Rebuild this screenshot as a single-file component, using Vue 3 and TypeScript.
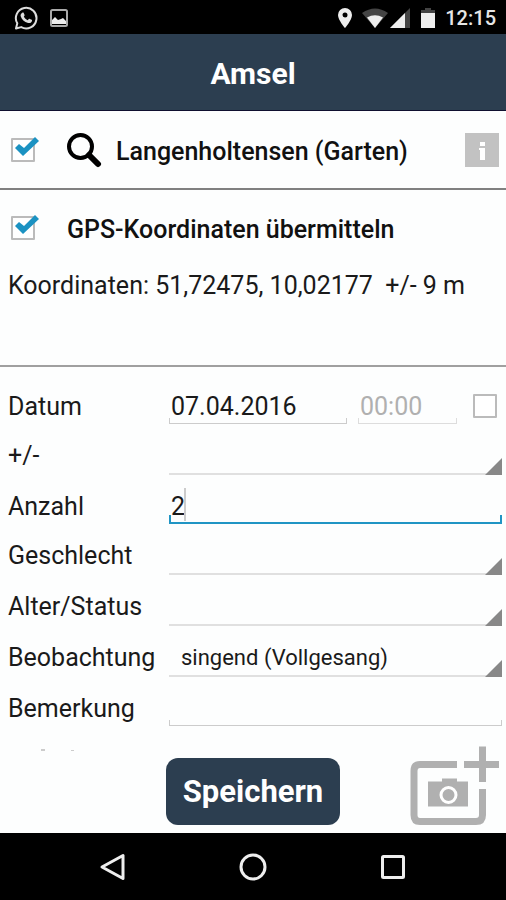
<script setup lang="ts">
import { ref } from 'vue'

interface Field {
  id: string
  label: string
  kind: 'text' | 'select'
  value: string
  active?: boolean
}

const useLocation = ref(true)
const sendGps = ref(true)
const date = ref('07.04.2016')
const time = ref('')
const withTime = ref(false)

const fields = ref<Field[]>([
  { id: 'accuracy', label: '+/-', kind: 'select', value: '' },
  { id: 'count', label: 'Anzahl', kind: 'text', value: '2', active: true },
  { id: 'sex', label: 'Geschlecht', kind: 'select', value: '' },
  { id: 'age', label: 'Alter/Status', kind: 'select', value: '' },
  { id: 'observation', label: 'Beobachtung', kind: 'select', value: 'singend (Vollgesang)' },
  { id: 'remark', label: 'Bemerkung', kind: 'text', value: '' },
])
</script>

<template>
  <div class="screen">
    <div class="status">
      <svg class="whatsapp" viewBox="0 0 24 24" width="24" height="24">
        <path d="M2 22.500 L3.300 17.300 A10.300 10.300 0 1 1 7.200 21.100 Z" fill="none" stroke="#ddd" stroke-width="2" stroke-linejoin="round" />
        <path d="M8.300 6.700c.5-.4 1.200-.3 1.400.2l.9 2c.1.400 0 .7-.8 1.700.9 1.800 2.100 2.900 3.900 3.700l1.100-1.300c.3-.3.6-.3 1-.1l1.900.9c.5.300.4.8.2 1.400-.5 1.500-2.300 2.200-3.800 1.800-3.800-1-6.500-3.600-7.400-6.700-.4-1.500.3-2.800 1.500-3.600z" fill="#ddd" />
      </svg>
      <svg viewBox="0 0 20 20" width="20" height="20">
        <rect x="2" y="2" width="16" height="16" rx="1.500" fill="none" stroke="#aaa" stroke-width="2" />
        <path d="M3 16v-4l3-3 3 3 3-1 2-1 3 3v3z" fill="#eee" />
      </svg>
      <div class="spacer"></div>
      <svg class="pin" viewBox="0 0 16 20" width="16" height="20">
        <path d="M8 0a7 7 0 0 0-7 7c0 5 7 13 7 13s7-8 7-13a7 7 0 0 0-7-7zm0 4.500a2.500 2.500 0 1 1 0 5 2.500 2.500 0 0 1 0-5z" fill="#eee" fill-rule="evenodd" />
      </svg>
      <svg class="wifi" viewBox="0 0 26 20" width="26" height="20">
        <path d="M0 5Q13-4 26 5L13 20z" fill="#444" />
        <path d="M5 9.500Q13 5 21 9.500L13 20z" fill="#eee" />
      </svg>
      <svg class="signal" viewBox="0 0 20 20" width="20" height="20">
        <path d="M0 20L20 0v20z" fill="#444" />
        <path d="M0 20L15 5v15z" fill="#eee" />
      </svg>
      <svg class="battery" viewBox="0 0 16 22" width="16" height="22">
        <path d="M1 3h4V1h6v2h4v3H1z" fill="#444" />
        <path d="M1 6h14v15H1z" fill="#eee" />
      </svg>
      <span class="clock">12:15</span>
    </div>

    <header class="header"><h1>Amsel</h1></header>

    <section class="place">
      <label class="check">
        <input v-model="useLocation" type="checkbox" aria-label="Langenholtensen (Garten)" />
        <svg v-if="useLocation" class="tick" viewBox="0 0 24 20" width="24" height="20">
          <path d="M0 11l4-4 5 4L20 0l4 4L8 19z" fill="#1b92c2" />
        </svg>
      </label>
      <button class="search" type="button" aria-label="Ort suchen">
        <svg viewBox="0 0 36 36" width="36" height="36">
          <circle cx="14.500" cy="14.500" r="11.500" fill="none" stroke="#000" stroke-width="4" />
          <path d="M23 23l9 9" stroke="#000" stroke-width="6" stroke-linecap="round" />
        </svg>
      </button>
      <span class="strong name">Langenholtensen (Garten)</span>
      <button class="info" type="button" aria-label="Information">
        <svg viewBox="0 0 34 34" width="34" height="34">
          <path d="M15 9h5v4h-5zM14 15h6v12h-5V17h-1z" fill="#fff" />
        </svg>
      </button>
    </section>

    <section class="gps">
      <label class="gps-row">
        <span class="check">
          <input v-model="sendGps" type="checkbox" />
          <svg v-if="sendGps" class="tick" viewBox="0 0 24 20" width="24" height="20">
            <path d="M0 11l4-4 5 4L20 0l4 4L8 19z" fill="#1b92c2" />
          </svg>
        </span>
        <span class="strong">GPS-Koordinaten übermitteln</span>
      </label>
      <p class="coords">Koordinaten: 51,72475, 10,02177&nbsp; +/- 9 m</p>
    </section>

    <form id="sighting" class="form" @submit.prevent>
      <div class="row text first">
        <label for="date">Datum</label>
        <div class="controls">
          <div class="field"><input id="date" v-model="date" type="text" /></div>
          <div class="field time"><input v-model="time" type="text" placeholder="00:00" aria-label="Uhrzeit" /></div>
          <span class="check"><input v-model="withTime" type="checkbox" aria-label="Uhrzeit angeben" /></span>
        </div>
      </div>
      <div v-for="f in fields" :key="f.id" class="row" :class="f.kind">
        <label :for="f.id">{{ f.label }}</label>
        <div v-if="f.kind === 'text'" class="field" :class="{ active: f.active }">
          <input :id="f.id" v-model="f.value" type="text" />
          <span v-if="f.active" class="caret"></span>
        </div>
        <div v-else class="spinner">
          <select :id="f.id" v-model="f.value">
            <option :value="f.value">{{ f.value }}</option>
          </select>
        </div>
      </div>
      <svg class="clipped" viewBox="0 0 40 2" width="40" height="2">
        <path d="M2 0h4v2H2zM32 1h3v1h-3z" fill="#ccc" />
      </svg>
    </form>

    <footer class="actions">
      <button class="save" type="submit" form="sighting">Speichern</button>
      <button class="photo" type="button" aria-label="Foto hinzufügen">
        <svg viewBox="0 0 90 80" width="90" height="80">
          <path d="M47 18.500H10Q4 18.500 4 25V69Q4 75.500 10 75.500H66Q72.500 75.500 72.500 69V43" fill="none" stroke="#b0b0b0" stroke-width="7" />
          <path d="M54 18.500H89M72.500 0.500V36" fill="none" stroke="#b0b0b0" stroke-width="7" />
          <path d="M18 35.500h14v-3h15v3h11v25H18z" fill="#b0b0b0" />
          <circle cx="38.500" cy="49" r="7.500" fill="#b0b0b0" stroke="#fff" stroke-width="3" />
        </svg>
      </button>
    </footer>

    <nav class="nav">
      <button type="button" aria-label="Zurück">
        <svg viewBox="0 0 28 28" width="28" height="28"><path d="M24 2.500v23L3 14z" fill="none" stroke="#eee" stroke-width="3" stroke-linejoin="round" /></svg>
      </button>
      <button type="button" aria-label="Startbildschirm">
        <svg viewBox="0 0 28 28" width="28" height="28"><circle cx="14" cy="14" r="12" fill="none" stroke="#eee" stroke-width="3" /></svg>
      </button>
      <button type="button" aria-label="Übersicht">
        <svg viewBox="0 0 28 28" width="28" height="28"><rect x="3.500" y="3.500" width="21" height="21" rx="1" fill="none" stroke="#eee" stroke-width="3" /></svg>
      </button>
    </nav>
  </div>
</template>

<style>
body {
  background: #fff;
}
</style>

<style scoped>
.screen {
  display: flex;
  flex-direction: column;
  min-height: 100vh;
  font-family: Roboto, "Liberation Sans", sans-serif;
  font-size: 25px;
  color: #1a1a1a;
  background: #fdfefe;
}
.screen * {
  box-sizing: border-box;
}
svg {
  display: block;
  flex: none;
}
button {
  padding: 0;
  border: 0;
  background: none;
  font: inherit;
}
.status {
  display: flex;
  align-items: center;
  height: 34px;
  padding: 1px 10px 0 14px;
  background: #000;
}
.whatsapp {
  margin-right: 11px;
}
.spacer {
  flex: 1;
}
.pin {
  margin-right: 9px;
}
.signal {
  margin: 0 10px 0 2px;
}
.battery {
  margin-right: 9px;
}
.clock {
  color: #e6e6e6;
  font-size: 20px;
  font-weight: 500;
}
.header {
  display: flex;
  align-items: center;
  justify-content: center;
  height: 77px;
  background: #2c3e50;
  border-bottom: 1px solid #101030;
}
h1 {
  margin: 0;
  padding-top: 2px;
  font-size: 30px;
  font-weight: 700;
  color: #fff;
}
.place {
  display: flex;
  align-items: center;
  height: 79px;
  padding: 0 7px 0 11px;
  border-bottom: 2px solid #808080;
}
.check {
  position: relative;
  display: block;
  flex: none;
  width: 24px;
  height: 24px;
}
.check input {
  display: block;
  appearance: none;
  width: 24px;
  height: 24px;
  margin: 0;
  border: 2px solid #bbb;
  border-radius: 1px;
  background: #fff;
}
.tick {
  position: absolute;
  left: 4px;
  top: -1px;
}
.search {
  margin: 0 14px 0 31px;
}
.strong {
  font-weight: 500;
  color: #111;
}
.name {
  padding-top: 4px;
}
.info {
  margin-left: auto;
  background: #c2c2c2;
}
.gps {
  height: 177px;
  padding: 24px 8px 0;
  border-bottom: 2px solid #a0a0a0;
}
.gps-row {
  display: flex;
  align-items: flex-start;
  gap: 32px;
  height: 32px;
  padding-left: 3px;
  line-height: 32px;
}
.gps-row .check {
  margin-top: 2px;
}
.coords {
  margin: 24px 0 0;
  line-height: 32px;
}
.form {
  flex: 1;
  padding: 8px 4px 0 8px;
}
.row {
  display: grid;
  grid-template-columns: 161px 1fr;
  align-items: end;
}
.row label {
  line-height: 34px;
}
.text {
  height: 49px;
}
.select {
  height: 51px;
}
.select label {
  line-height: 38px;
}
.controls {
  display: grid;
  grid-template-columns: 178px 99px 1fr;
  gap: 11px;
}
.controls .check {
  justify-self: end;
  margin: 6px 5px 0 0;
}
.field {
  position: relative;
}
.field::after {
  content: "";
  position: absolute;
  inset: auto 0 0;
  height: 5px;
  border: solid #ccc;
  border-width: 0 1px 1px;
  pointer-events: none;
}
.field.active::after {
  height: 7px;
  border-color: #2095c4;
  border-width: 0 2px 2px;
}
.field input {
  display: block;
  width: 100%;
  height: 36px;
  padding: 0 2px;
  border: 0;
  outline: 0;
  background: none;
  font: inherit;
  color: inherit;
}
.field input::placeholder {
  color: #b0b0b0;
  opacity: 1;
}
.time::after {
  border-color: #ddd;
}
.caret {
  position: absolute;
  left: 15px;
  bottom: 3px;
  width: 2px;
  height: 33px;
  background: #ccc;
}
.spinner {
  position: relative;
  border-bottom: 2px solid #e0e0e0;
}
.spinner::after {
  content: "";
  position: absolute;
  right: 0;
  bottom: -2px;
  width: 17px;
  height: 17px;
  background: #888;
  clip-path: polygon(100% 0, 100% 100%, 0 100%);
  pointer-events: none;
}
.spinner select {
  display: block;
  width: 100%;
  height: 36px;
  padding: 0 20px 0 12px;
  border: 0;
  outline: 0;
  appearance: none;
  background: none;
  font: inherit;
  font-size: 22px;
  color: inherit;
}
.clipped {
  margin: 23px 0 0 31px;
}
.actions {
  display: grid;
  grid-template-columns: 1fr 174px 1fr;
  align-items: end;
  margin-top: -6px;
  padding: 0 6px 7px;
}
.save {
  grid-column: 2;
  height: 67px;
  margin-bottom: 1px;
  border-radius: 12px;
  background: #2c3e50;
  color: #fff;
  font-size: 31px;
  font-weight: 700;
}
.photo {
  justify-self: end;
}
.nav {
  display: flex;
  align-items: center;
  justify-content: center;
  gap: 112px;
  height: 67px;
  background: #000;
}
</style>
